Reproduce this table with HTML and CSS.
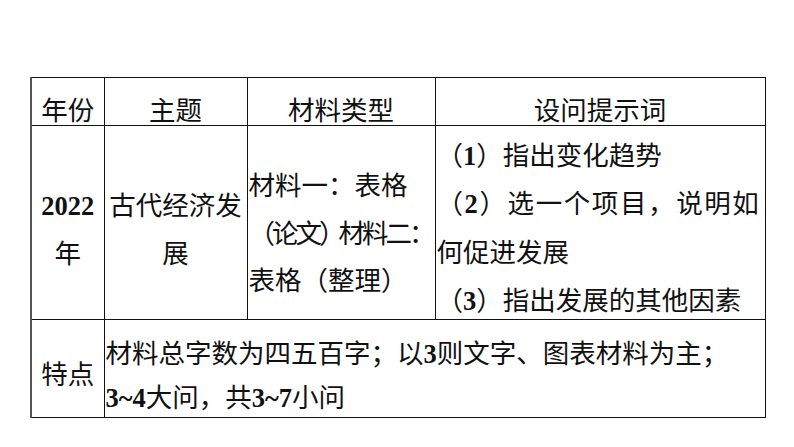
FILE: index.html
```html
<!DOCTYPE html>
<html lang="zh-CN">
<head>
<meta charset="utf-8">
<title>材料题特点</title>
<link rel="stylesheet" href="styles.css">
</head>
<body>
<div class="sheet">
  <table class="grid">
    <colgroup>
      <col class="c-year">
      <col class="c-theme">
      <col class="c-type">
      <col class="c-hint">
    </colgroup>
    <tr class="head">
      <td>年份</td>
      <td>主题</td>
      <td>材料类型</td>
      <td>设问提示词</td>
    </tr>
    <tr class="body">
      <td class="year"><div class="cell-in"><span class="num">2022</span><br>年</div></td>
      <td class="theme"><div class="cell-in">古代经济发<br>展</div></td>
      <td class="type"><div class="cell-in">材料一：表格<br><span class="squeeze">（论文<span class="close">）</span>材料二：</span><br>表格（整理）</div></td>
      <td class="hint"><div class="cell-in">（<span class="num">1</span>）指出变化趋势<br><span class="wide">（<span class="num">2</span>）选一个项目，说明如</span><br>何促进发展<br>（<span class="num">3</span>）指出发展的其他因素</div></td>
    </tr>
    <tr class="foot">
      <td class="label"><div class="cell-in">特点</div></td>
      <td class="summary" colspan="3"><div class="cell-in">材料总字数为四五百字；以<span class="num">3</span>则文字、图表材料为主；<br><span class="num">3~4</span>大问，共<span class="num">3~7</span>小问</div></td>
    </tr>
  </table>
</div>
</body>
</html>
```

FILE: styles.css
```css
html, body {
  margin: 0;
  padding: 0;
  background: #ffffff;
}

body {
  font-family: "Noto Sans CJK SC", "Noto Sans CJK JP", sans-serif;
  font-size: 26.5px;
  color: #111111;
}

.sheet {
  padding: 77px 0 0 30px;
}

.grid {
  border-collapse: collapse;
  table-layout: fixed;
  width: 734px;
}

.c-year { width: 73px; }
.c-theme { width: 143px; }
.c-type { width: 188px; }
.c-hint { width: 330px; }

.grid td {
  border: 1px solid #111111;
  padding: 0;
  white-space: nowrap;
}

.grid td:first-child {
  border-left: 2px solid #555555;
}

.num {
  font-family: "Liberation Serif", "Times New Roman", serif;
  font-weight: bold;
  line-height: 1;
}

.head td {
  height: 48px;
  text-align: center;
  vertical-align: top;
  line-height: 30px;
  padding-top: 16px;
  box-sizing: border-box;
}

.body td {
  height: 193px;
  vertical-align: top;
  line-height: 48px;
}

.cell-in {
  height: 0;
  overflow: visible;
}

.body .year,
.body .theme {
  text-align: center;
}

.body .year .cell-in,
.body .theme .cell-in {
  padding-top: 54px;
}

.body .type .cell-in {
  padding-top: 34px;
  padding-left: 1px;
  line-height: 47.5px;
}

.squeeze {
  letter-spacing: -3px;
}

.close {
  letter-spacing: -7px;
}

.body .hint .cell-in {
  padding-top: 4px;
  padding-left: 1px;
  line-height: 48.4px;
}

.wide {
  letter-spacing: 1.6px;
}

.foot td {
  height: 97px;
  vertical-align: top;
  line-height: 44px;
}

.foot .label {
  text-align: center;
}

.foot .label .cell-in {
  padding-top: 31px;
}

.foot .summary .cell-in {
  padding-top: 10px;
  padding-left: 1px;
}
```
